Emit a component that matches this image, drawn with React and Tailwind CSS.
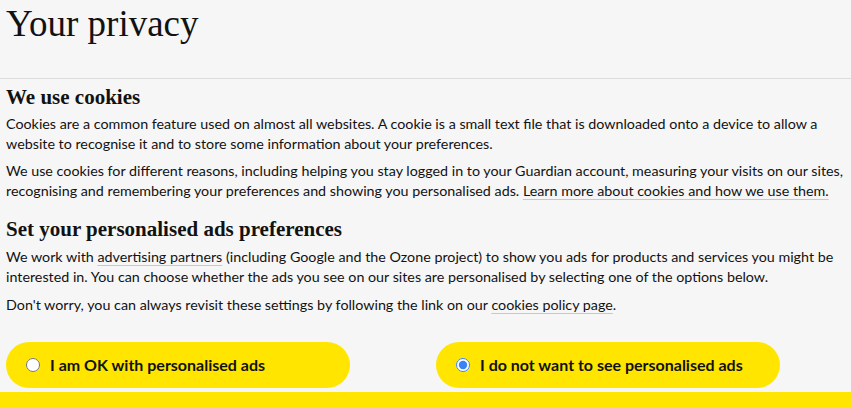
import React, { useState } from 'react';

const serif = { fontFamily: '"Liberation Serif", "DejaVu Serif", serif' };

const App = () => {
  const [choice, setChoice] = useState('no');

  const Option = ({ value, label }) => (
    <label className="flex items-center gap-[10px] h-[46px] w-[344px] rounded-[23px] bg-[#ffe500] pl-[20px] cursor-pointer">
      <input
        type="radio"
        name="ads"
        checked={choice === value}
        onChange={() => setChoice(value)}
        className="w-[14px] h-[14px] m-0 accent-[#3b82f6]"
      />
      <span className="text-[16px] font-bold text-[#121212]">{label}</span>
    </label>
  );

  return (
    <div className="min-h-[407px] bg-[#f6f6f6] text-[#121212] font-['Lato',sans-serif]">
      <div className="px-[6px] pt-[2px] h-[79px] border-b border-[#dcdcdc]">
        <h1 className="text-[37px] leading-[44px]" style={serif}>Your privacy</h1>
      </div>

      <div className="px-[6px] pt-[6px]">
        <h2 className="text-[21px] leading-[24px] font-bold" style={serif}>We use cookies</h2>
        <p className="text-[14.3px] leading-[20px] mt-[5px]">
          Cookies are a common feature used on almost all websites. A cookie is a small text file that is downloaded onto a device to allow a website to recognise it and to store some information about your preferences.
        </p>
        <p className="text-[14.3px] leading-[20px] mt-[7px]">
          We use cookies for different reasons, including helping you stay logged in to your Guardian account, measuring your visits on our sites, recognising and remembering your preferences and showing you personalised ads.{' '}
          <a className="underline decoration-[#c8c8c8] underline-offset-[3px]">Learn more about cookies and how we use them.</a>
        </p>

        <h2 className="text-[21px] leading-[24px] font-bold mt-[16px]" style={serif}>Set your personalised ads preferences</h2>
        <p className="text-[14.3px] leading-[20px] mt-[6px]">
          We work with{' '}
          <a className="underline decoration-[#c8c8c8] underline-offset-[3px]">advertising partners</a>{' '}
          (including Google and the Ozone project) to show you ads for products and services you might be interested in. You can choose whether the ads you see on our sites are personalised by selecting one of the options below.
        </p>
        <p className="text-[14.3px] leading-[20px] mt-[8px]">
          Don't worry, you can always revisit these settings by following the link on our{' '}
          <a className="underline decoration-[#c8c8c8] underline-offset-[3px]">cookies policy page</a>.
        </p>
      </div>

      <div className="grid grid-cols-[430px_1fr] px-[6px] mt-[27px]">
        <Option value="yes" label="I am OK with personalised ads" />
        <Option value="no" label="I do not want to see personalised ads" />
      </div>

      <div className="h-[15px] bg-[#ffe500] mt-[4px]" />
    </div>
  );
};

export default App;
